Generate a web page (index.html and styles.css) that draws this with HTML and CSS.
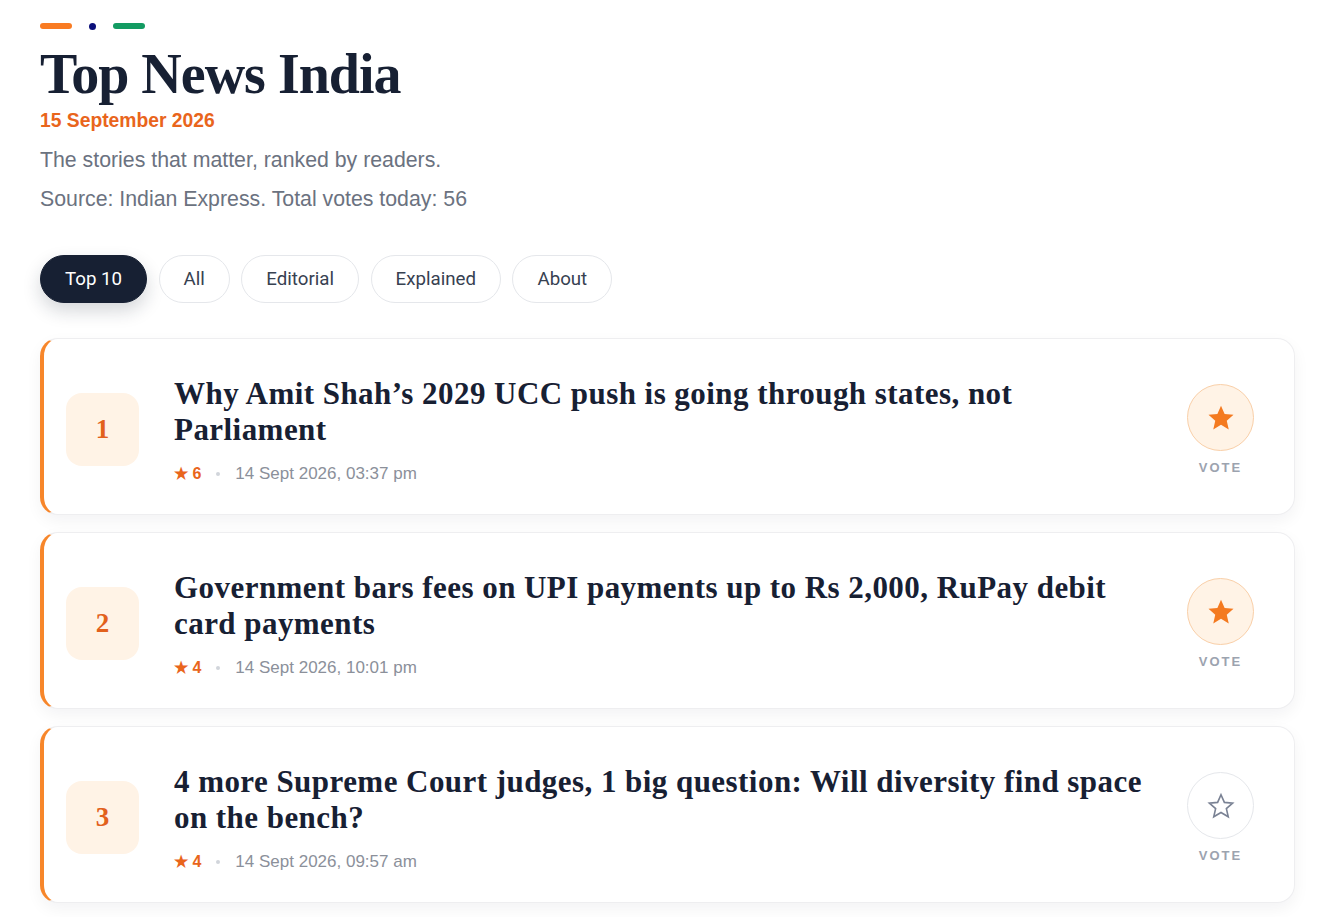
FILE: index.html
```html
<!DOCTYPE html>
<html lang="en">
  <head>
    <title> Top News India </title>
    <meta charset="utf-8">
    <link rel="stylesheet" href="styles.css">
  </head>
  <body>
    <header class="masthead">
      <div class="flag">
        <span class="flag-saffron"></span>
        <span class="flag-dot"></span>
        <span class="flag-green"></span>
      </div>
      <h1 class="title">Top News India</h1>
      <p class="date">15 September 2026</p>
      <p class="lede">The stories that matter, ranked by readers.</p>
      <p class="lede">Source: Indian Express. Total votes today: 56</p>
    </header>

    <nav class="tabs">
      <a class="tab active" href="#">Top 10</a>
      <a class="tab" href="#">All</a>
      <a class="tab" href="#">Editorial</a>
      <a class="tab" href="#">Explained</a>
      <a class="tab" href="#">About</a>
    </nav>

    <ol class="stories">
      <li class="story">
        <div class="rank">1</div>
        <div class="story-body">
          <h2 class="headline">Why Amit Shah’s 2029 UCC push is going through states, not Parliament</h2>
          <div class="meta">
            <span class="score">&#9733; 6</span>
            <span class="sep"></span>
            <span class="time">14 Sept 2026, 03:37 pm</span>
          </div>
        </div>
        <div class="vote">
          <button class="vote-btn voted">
            <svg width="30" height="30" viewBox="0 0 24 24"><path d="M12 2.2l2.9 6.6 7.1.6-5.4 4.7 1.6 7-6.2-3.7-6.2 3.7 1.6-7L2 9.4l7.1-.6z"/></svg>
          </button>
          <span class="vote-label">VOTE</span>
        </div>
      </li>
      <li class="story">
        <div class="rank">2</div>
        <div class="story-body">
          <h2 class="headline">Government bars fees on UPI payments up to Rs 2,000, RuPay debit card payments</h2>
          <div class="meta">
            <span class="score">&#9733; 4</span>
            <span class="sep"></span>
            <span class="time">14 Sept 2026, 10:01 pm</span>
          </div>
        </div>
        <div class="vote">
          <button class="vote-btn voted">
            <svg width="30" height="30" viewBox="0 0 24 24"><path d="M12 2.2l2.9 6.6 7.1.6-5.4 4.7 1.6 7-6.2-3.7-6.2 3.7 1.6-7L2 9.4l7.1-.6z"/></svg>
          </button>
          <span class="vote-label">VOTE</span>
        </div>
      </li>
      <li class="story">
        <div class="rank">3</div>
        <div class="story-body">
          <h2 class="headline">4 more Supreme Court judges, 1 big question: Will diversity find space on the bench?</h2>
          <div class="meta">
            <span class="score">&#9733; 4</span>
            <span class="sep"></span>
            <span class="time">14 Sept 2026, 09:57 am</span>
          </div>
        </div>
        <div class="vote">
          <button class="vote-btn">
            <svg width="30" height="30" viewBox="0 0 24 24"><path d="M12 3l2.7 6.1 6.6.6-5 4.4 1.5 6.5-5.8-3.4-5.8 3.4 1.5-6.5-5-4.4 6.6-.6z"/></svg>
          </button>
          <span class="vote-label">VOTE</span>
        </div>
      </li>
    </ol>
  </body>
</html>
```

FILE: styles.css
```css
html, body {
  margin: 0;
}
body {
  background: #ffffff;
  color: #172033;
  font-family: "Liberation Sans", Arial, sans-serif;
  padding: 22px 22px 40px 40px;
}
.flag {
  display: flex;
  align-items: center;
  gap: 17px;
  height: 8px;
}
.flag-saffron, .flag-green {
  width: 32px;
  height: 6px;
  border-radius: 3px;
}
.flag-saffron {
  background: #f97b22;
}
.flag-green {
  background: #139b62;
}
.flag-dot {
  width: 7px;
  height: 7px;
  border-radius: 50%;
  background: #0b0f7a;
}
.title {
  font-family: "Liberation Serif", Georgia, serif;
  font-weight: bold;
  font-size: 56px;
  letter-spacing: -1px;
  line-height: 60px;
  margin: 14px 0 0;
  color: #172033;
}
.date {
  color: #e9651c;
  font-weight: bold;
  font-size: 19.3px;
  margin: 6px 0 0;
}
.date + .lede {
  margin-top: 16px;
}
.lede {
  color: #6b7280;
  font-size: 21.3px;
  margin: 14px 0 0;
  line-height: 25px;
}
.tabs {
  display: flex;
  gap: 11.5px;
  margin-top: 43px;
}
.tab {
  font-family: Roboto, "Liberation Sans", sans-serif;
  font-size: 18.7px;
  color: #374151;
  text-decoration: none;
  height: 48px;
  line-height: 46px;
  padding: 0 24px;
  border: 1px solid #e5e7eb;
  border-radius: 24px;
  box-sizing: border-box;
  background: #fff;
}
.tab.active {
  background: #172033;
  color: #fff;
  border-color: #172033;
  box-shadow: 0 8px 18px rgba(23, 32, 51, 0.18);
}
.stories {
  list-style: none;
  margin: 35px 0 0;
  padding: 0;
  display: flex;
  flex-direction: column;
  gap: 17px;
}
.story {
  display: flex;
  align-items: center;
  min-height: 177px;
  box-sizing: border-box;
  background: #fff;
  border: 1px solid #eeeef0;
  border-left: 4px solid #f7862a;
  border-radius: 18px;
  box-shadow: 0 6px 16px rgba(15, 23, 42, 0.05);
  padding: 24px 40px 18px 22px;
}
.rank {
  flex: none;
  width: 73px;
  height: 73px;
  border-radius: 16px;
  background: #fff3e6;
  color: #e2611c;
  font-family: "Liberation Serif", Georgia, serif;
  font-weight: bold;
  font-size: 27px;
  display: flex;
  align-items: center;
  justify-content: center;
  margin-right: 35px;
}
.story-body {
  flex: 1;
}
.headline {
  font-family: "Liberation Serif", Georgia, serif;
  font-weight: bold;
  font-size: 31px;
  letter-spacing: 0.45px;
  line-height: 36px;
  margin: 0;
  color: #172033;
  max-width: 980px;
}
.meta {
  display: flex;
  align-items: center;
  margin-top: 16px;
  font-size: 17px;
}
.score {
  color: #e9651c;
  font-weight: bold;
  font-size: 16px;
}
.sep {
  width: 4px;
  height: 4px;
  border-radius: 50%;
  background: #d1d5db;
  margin: 0 15px;
}
.time {
  color: #8b909a;
}
.vote {
  flex: none;
  display: flex;
  flex-direction: column;
  align-items: center;
  gap: 9px;
  margin-left: 30px;
}
.vote-btn {
  width: 67px;
  height: 67px;
  border-radius: 50%;
  border: 1px solid #e5e7eb;
  background: #fff;
  padding: 0;
  display: flex;
  align-items: center;
  justify-content: center;
}
.vote-btn svg {
  fill: none;
  stroke: #7a8294;
  stroke-width: 1.3;
  stroke-linejoin: miter;
}
.vote-btn.voted {
  background: #fff3e6;
  border-color: #f9cfa8;
}
.vote-btn.voted svg {
  fill: #f47a20;
  stroke: none;
}
.vote-label {
  font-size: 13px;
  font-weight: bold;
  letter-spacing: 2px;
  color: #9ca3af;
}
```
